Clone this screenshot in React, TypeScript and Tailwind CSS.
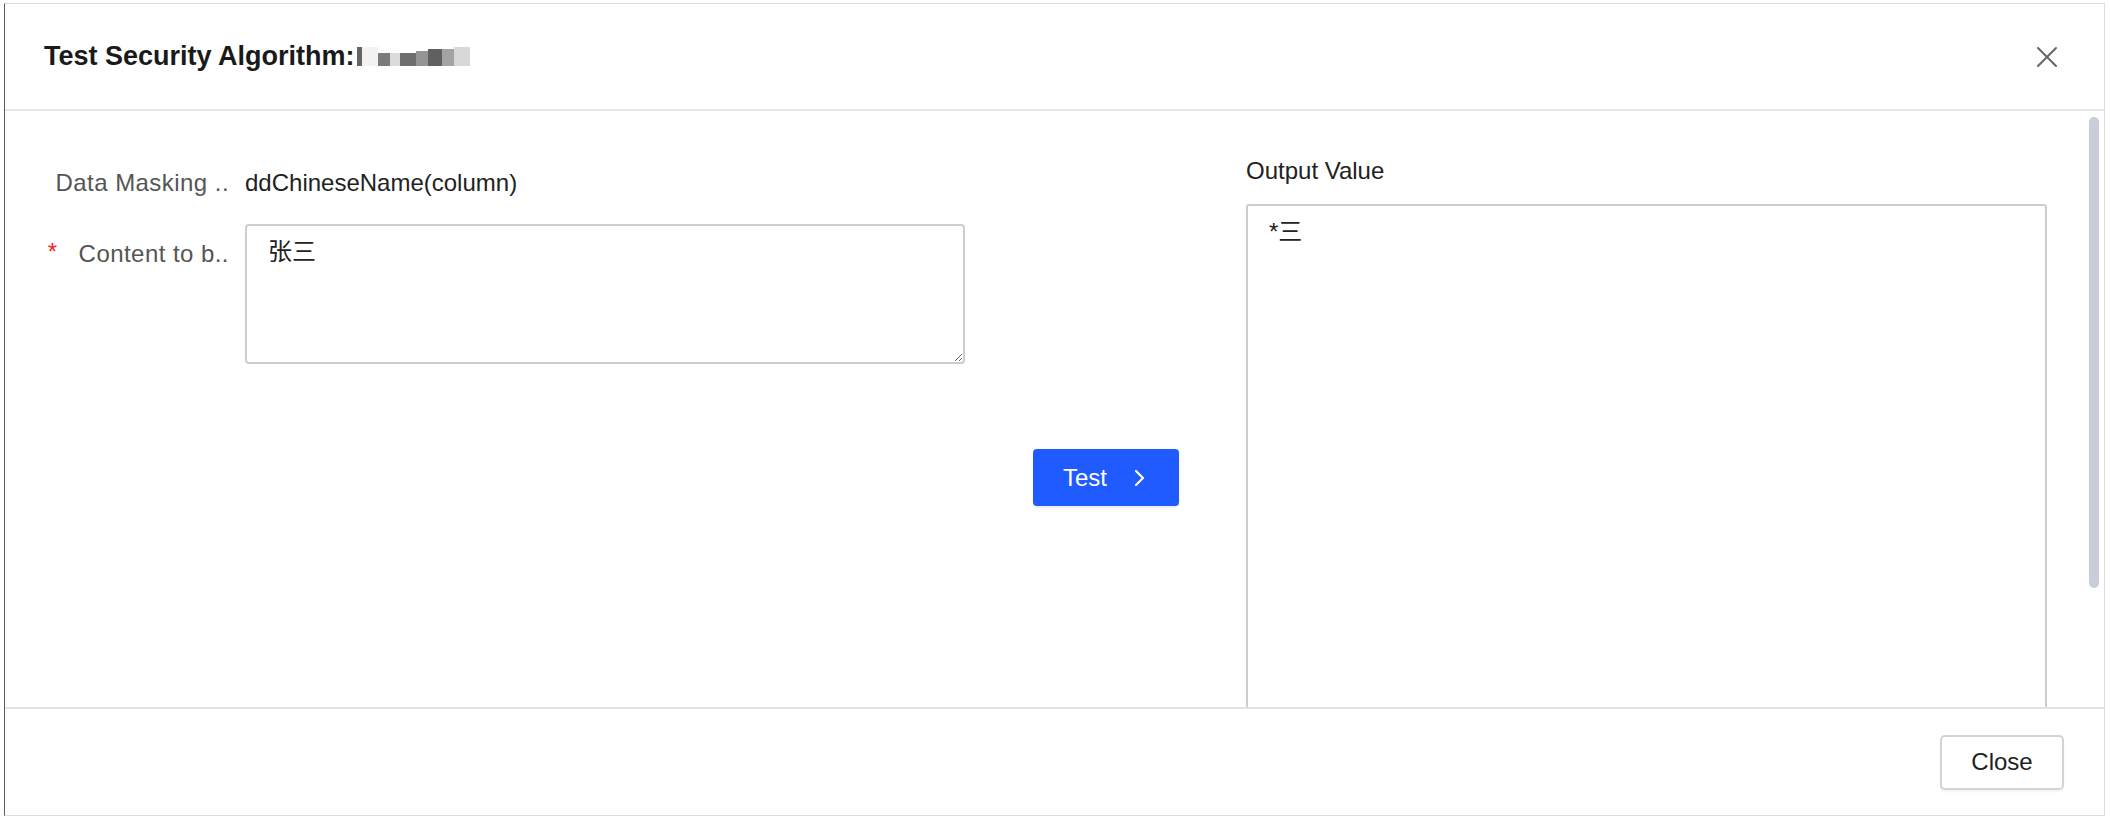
import React from 'react';

const redacted = [
  { w: 5, c: 'bg-[#555]', h: 'h-[19px]' },
  { w: 16, c: 'bg-[#f1f1f1]', h: 'h-[19px]' },
  { w: 12, c: 'bg-[#6d6d6d]', h: 'h-[13px]' },
  { w: 10, c: 'bg-[#d8d8d8]', h: 'h-[13px]' },
  { w: 16, c: 'bg-[#5f5f5f]', h: 'h-[13px]' },
  { w: 12, c: 'bg-[#8a8a8a]', h: 'h-[15px]' },
  { w: 14, c: 'bg-[#4f4f4f]', h: 'h-[17px]' },
  { w: 12, c: 'bg-[#9a9a9a]', h: 'h-[17px]' },
  { w: 16, c: 'bg-[#d4d4d4]', h: 'h-[19px]' },
];

function CloseIcon() {
  return (
    <svg width="22" height="22" viewBox="0 0 22 22" fill="none">
      <path d="M2 2L20 20M20 2L2 20" stroke="#666" strokeWidth="2" strokeLinecap="round" />
    </svg>
  );
}

function Chevron() {
  return (
    <svg width="12" height="18" viewBox="0 0 12 18" fill="none">
      <path d="M3 2L10 9L3 16" stroke="#fff" strokeWidth="2.2" strokeLinecap="round" strokeLinejoin="round" />
    </svg>
  );
}

export default function App() {
  return (
    <div className="w-[2110px] h-[820px] bg-white pt-[3px] pl-[4px] font-['Liberation_Sans','Noto_Sans_CJK_SC',sans-serif]">
      <div className="w-[2101px] h-[813px] border border-[#dddddd] border-l-[#5a5a5a] flex flex-col bg-white">
        {/* Header */}
        <div className="h-[107px] shrink-0 flex items-center justify-between pl-[39px] pr-[46px] border-b-2 border-[#e6e6e6]">
          <div className="flex items-center">
            <span className="text-[27px] font-bold text-[#1a1a1a]">Test Security Algorithm:</span>
            <span className="flex items-end ml-[2px] opacity-90">
              {redacted.map((r, i) => (
                <span key={i} className={`${r.c} ${r.h} inline-block`} style={{ width: r.w }} />
              ))}
            </span>
          </div>
          <CloseIcon />
        </div>

        {/* Body */}
        <div className="flex-1 flex overflow-hidden">
          <div className="flex-1 flex pl-[39px] min-w-0">
            {/* Left column */}
            <div className="w-[1135px] shrink-0 flex flex-col pt-[52px]">
              <div className="flex items-center h-[40px]">
                <div className="w-[185px] text-right text-[24px] tracking-[0.45px] text-[#555] whitespace-nowrap">Data Masking ..</div>
                <div className="ml-[16px] text-[24px] text-[#222]">ddChineseName(column)</div>
              </div>
              <div className="flex mt-[21px]">
                <div className="w-[185px] flex justify-end pt-[12px] text-[24px] tracking-[0.45px] text-[#555] whitespace-nowrap">
                  <span className="text-[#f5222d] mr-[21px] mt-[-2px]">*</span>
                  <span>Content to b..</span>
                </div>
                <textarea
                  defaultValue="张三"
                  className="ml-[16px] w-[720px] h-[140px] border-2 border-[#cccccc] rounded-[4px] px-[21px] pt-[10px] text-[24px] leading-[32px] text-[#222] outline-none"
                />
              </div>
              <div className="flex justify-end mt-[85px]">
                <button className="h-[57px] w-[146px] bg-[#1f5bff] text-white text-[24px] rounded-[4px] flex items-center pl-[30px] gap-[26px] shadow-[0_2px_2px_rgba(0,0,0,0.08)]">
                  <span>Test</span>
                  <Chevron />
                </button>
              </div>
            </div>

            {/* Right column */}
            <div className="ml-[67px] w-[801px] shrink-0 flex flex-col pt-[44px]">
              <div className="h-[32px] flex items-center text-[24px] text-[#222]">Output Value</div>
              <div className="mt-[17px] h-[620px] shrink-0 border-2 border-[#cccccc] rounded-[3px] px-[21px] pt-[10px] text-[24px] leading-[32px] text-[#222]">
                *三
              </div>
            </div>
          </div>

          {/* Scrollbar */}
          <div className="w-[15px] shrink-0 pt-[6px] pr-[4px]">
            <div className="w-[10px] h-[471px] rounded-full bg-[#c9ccd9]" />
          </div>
        </div>

        {/* Footer */}
        <div className="h-[108px] shrink-0 border-t-2 border-[#e3e3e3] flex items-center justify-end pr-[40px]">
          <button className="w-[124px] h-[55px] border-2 border-[#d4d4d4] rounded-[5px] bg-white text-[24px] text-[#222] shadow-[0_2px_2px_rgba(0,0,0,0.05)]">
            Close
          </button>
        </div>
      </div>
    </div>
  );
}
